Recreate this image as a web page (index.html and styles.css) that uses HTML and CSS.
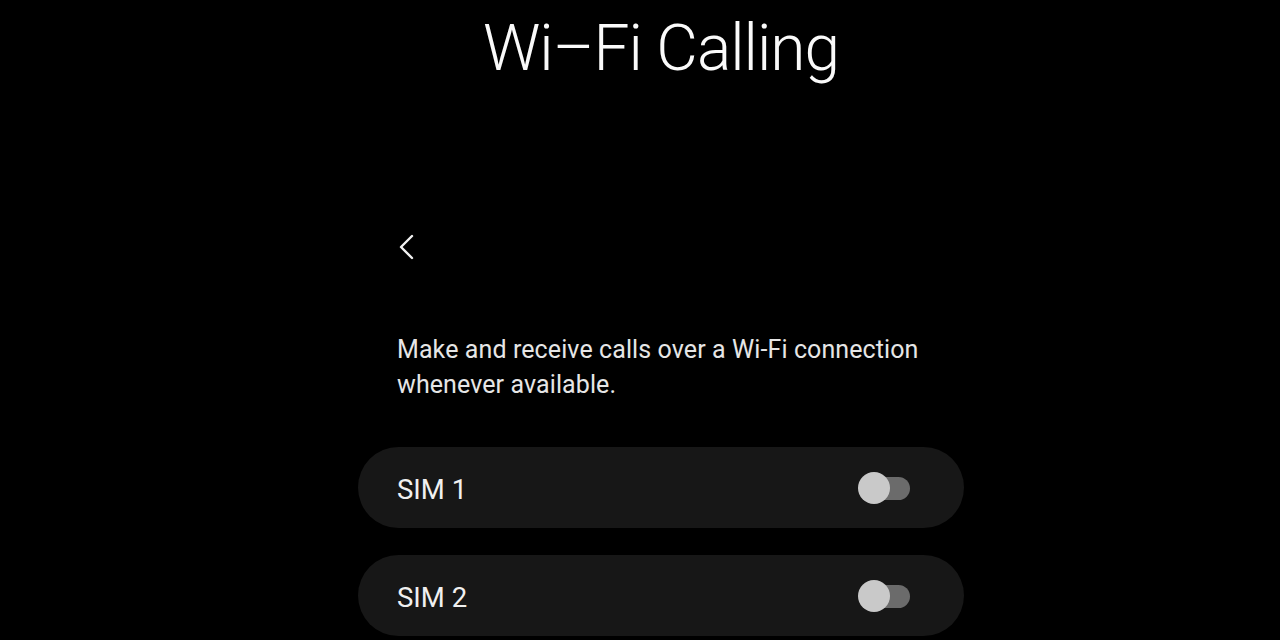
FILE: index.html
```html
<!DOCTYPE html>
<html lang="en">
<head>
    <meta charset="UTF-8">
    <meta name="viewport" content="width=device-width, initial-scale=1.0">
    <title>Wi-Fi Calling</title>
    <link rel="stylesheet" href="styles.css">
</head>
<body>
<div class="page">
    <h1 class="page-title">Wi–Fi Calling</h1>
    <div class="settings">
        <button class="back-button" aria-label="Back">
            <svg width="20" height="28" viewBox="0 0 20 28">
                <path d="M16 3 L5 14 L16 25" fill="none" stroke="#f2f2f2" stroke-width="2.4" stroke-linecap="round" stroke-linejoin="round"/>
            </svg>
        </button>
        <p class="description">Make and receive calls over a Wi-Fi connection whenever available.</p>
        <div class="sim-list">
            <div class="sim-row">
                <span class="sim-label">SIM 1</span>
                <label class="switch">
                    <input type="checkbox">
                    <span class="track"></span>
                    <span class="thumb"></span>
                </label>
            </div>
            <div class="sim-row">
                <span class="sim-label">SIM 2</span>
                <label class="switch">
                    <input type="checkbox">
                    <span class="track"></span>
                    <span class="thumb"></span>
                </label>
            </div>
        </div>
    </div>
</div>
</body>
</html>
```

FILE: styles.css
```css
body {
    margin: 0;
    padding: 0;
    background: #000;
    color: #f2f2f2;
    font-family: Roboto, "Noto Sans", sans-serif;
    overflow: hidden;
}
.page {
    padding-left: 42px;
}
.page-title {
    margin: 0;
    padding-top: 10px;
    text-align: center;
    font-size: 64px;
    font-weight: 300;
    letter-spacing: -1px;
    line-height: 78px;
    color: #fafafa;
}
.settings {
    width: 606px;
    margin: 0 auto;
}
.back-button {
    display: block;
    margin: 145px 0 0 38px;
    padding: 0;
    border: none;
    background: none;
    cursor: pointer;
}
.description {
    margin: 68px 0 0 39px;
    font-size: 25px;
    letter-spacing: 0.1px;
    line-height: 35px;
    color: #e6e6e6;
    width: 560px;
}
.sim-list {
    display: flex;
    flex-direction: column;
    gap: 27px;
    margin-top: 45px;
}
.sim-row {
    display: flex;
    align-items: center;
    justify-content: space-between;
    height: 81px;
    padding: 0 54px 0 39px;
    border-radius: 41px;
    background: #171717;
}
.sim-label {
    padding-top: 3px;
    font-size: 27.5px;
    color: #f0f0f0;
}
.switch {
    position: relative;
    width: 52px;
    height: 32px;
}
.switch input {
    display: none;
}
.track {
    position: absolute;
    left: 12px;
    top: 5px;
    width: 40px;
    height: 23px;
    border-radius: 12px;
    background: #6b6b6b;
}
.thumb {
    position: absolute;
    left: 0;
    top: 0;
    width: 32px;
    height: 32px;
    border-radius: 50%;
    background: #c9c9c9;
}
```
